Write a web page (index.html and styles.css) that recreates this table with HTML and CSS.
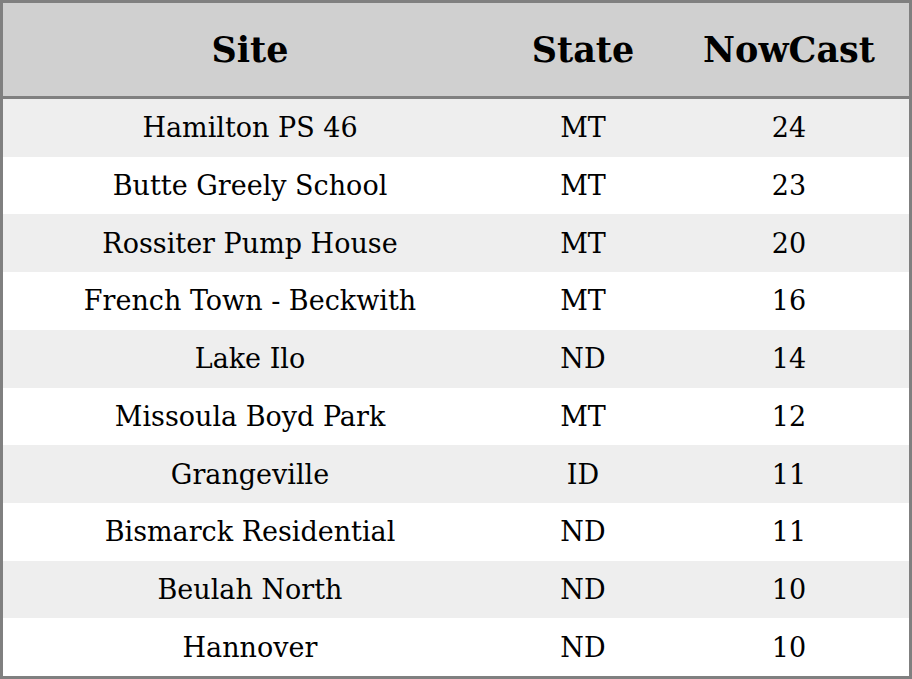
FILE: index.html
```html
<!DOCTYPE html>
<html>
<head>
<meta charset="utf-8">
<link rel="stylesheet" href="styles.css">
</head>
<body>
<div class="table">
  <div class="row head">
    <div class="c site">Site</div>
    <div class="c state">State</div>
    <div class="c now">NowCast</div>
  </div>
  <div class="body">
    <div class="row odd"><div class="c site">Hamilton PS 46</div><div class="c state">MT</div><div class="c now">24</div></div>
    <div class="row"><div class="c site">Butte Greely School</div><div class="c state">MT</div><div class="c now">23</div></div>
    <div class="row odd"><div class="c site">Rossiter Pump House</div><div class="c state">MT</div><div class="c now">20</div></div>
    <div class="row"><div class="c site">French Town - Beckwith</div><div class="c state">MT</div><div class="c now">16</div></div>
    <div class="row odd"><div class="c site">Lake Ilo</div><div class="c state">ND</div><div class="c now">14</div></div>
    <div class="row"><div class="c site">Missoula Boyd Park</div><div class="c state">MT</div><div class="c now">12</div></div>
    <div class="row odd"><div class="c site">Grangeville</div><div class="c state">ID</div><div class="c now">11</div></div>
    <div class="row"><div class="c site">Bismarck Residential</div><div class="c state">ND</div><div class="c now">11</div></div>
    <div class="row odd"><div class="c site">Beulah North</div><div class="c state">ND</div><div class="c now">10</div></div>
    <div class="row"><div class="c site">Hannover</div><div class="c state">ND</div><div class="c now">10</div></div>
  </div>
</div>
</body>
</html>
```
FILE: styles.css
```css
html, body {
  margin: 0;
  padding: 0;
  background: #ffffff;
}
.table {
  width: 912px;
  height: 679px;
  box-sizing: border-box;
  border: 3px solid #808080;
  display: flex;
  flex-direction: column;
  font-family: "DejaVu Serif", serif;
  color: #000;
}
.row {
  display: flex;
  align-items: center;
  flex: 1;
}
.head {
  flex: 0 0 93px;
  background: #d0d0d0;
  border-bottom: 3px solid #808080;
  font-weight: bold;
  font-size: 35px;
}
.body {
  flex: 1;
  display: flex;
  flex-direction: column;
  font-size: 27px;
}
.odd {
  background: #eeeeee;
}
.c {
  text-align: center;
}
.site { width: 494px; }
.state { width: 172px; }
.now { width: 240px; }
```
